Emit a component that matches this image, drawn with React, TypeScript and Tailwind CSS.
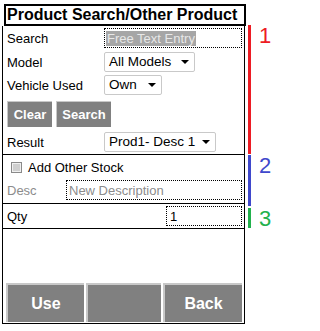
import React from "react";

const font = { fontFamily: '"Liberation Sans", Arial, sans-serif' };

const Arrow = () => (
  <span className="ml-auto h-0 w-0 border-x-[4px] border-t-[4px] border-x-transparent border-t-black" />
);

function Select({ value, width }: { value: string; width: string }) {
  return (
    <div
      className={`${width} flex h-[20px] items-center rounded-[2px] border border-[#c9c9c9] bg-white pl-[4px] pr-[5px] text-[13.5px] text-black`}
    >
      <span className="leading-none">{value}</span>
      <Arrow />
    </div>
  );
}

function Row({ label, children, labelWidth = "w-[97px]", className = "" }: { label: string; children: React.ReactNode; labelWidth?: string; className?: string }) {
  return (
    <div className={`flex items-center ${className}`}>
      <span className={`${labelWidth} shrink-0 text-[13px] leading-none`}>{label}</span>
      {children}
    </div>
  );
}

function Annotation({ color, digit, height, className = "" }: { color: string; digit: string; height: string; className?: string }) {
  return (
    <div className={`flex ${height} ${className}`}>
      <div className={`w-[3px] ${color === "red" ? "bg-[#ed1c24]" : color === "blue" ? "bg-[#3f48cc]" : "bg-[#22b14c]"}`} />
      <span
        className={`ml-[8px] text-[22px] leading-none ${color === "red" ? "text-[#ed1c24]" : color === "blue" ? "text-[#3f48cc]" : "text-[#22b14c]"}`}
      >
        {digit}
      </span>
    </div>
  );
}

export default function App() {
  return (
    <div className="flex h-[331px] w-[291px] bg-white pl-[2px] pt-[4px] text-black" style={font}>
      <div className="flex w-[244px] flex-col">
        <div className="ml-[2px] flex h-[22px] w-[242px] items-center border-2 border-black pl-[1px] text-[16px] font-bold leading-none">
          Product Search/Other Product
        </div>
        <div className="flex h-[298px] w-[243px] flex-col border-x border-b border-black">
          {/* section 1 */}
          <div className="flex flex-col border-b border-black pb-[2px] pl-[4px] pt-[2px]">
            <Row label="Search" className="h-[20px]">
              <div className="flex h-[20px] w-[138px] items-center border border-dotted border-black pl-[1px]">
                <span className="bg-[#a6a6a6] px-[1px] text-[13px] leading-[15px] text-[#e8e8e8]">Free Text Entry</span>
              </div>
            </Row>
            <Row label="Model" className="mt-[4px] h-[20px]">
              <Select value="All Models" width="w-[91px]" />
            </Row>
            <Row label="Vehicle Used" className="mt-[3px] h-[20px]">
              <Select value="Own" width="w-[58px]" />
            </Row>
            <div className="mt-[6px] flex h-[26px] gap-[4px]">
              <button className="w-[45px] border-l border-t border-[#c8c8c8] bg-[#808080] text-[13px] font-bold text-white">
                Clear
              </button>
              <button className="w-[55px] border-l border-t border-[#c8c8c8] bg-[#808080] text-[13px] font-bold text-white">
                Search
              </button>
            </div>
            <Row label="Result" className="mt-[5px] h-[20px]">
              <Select value="Prod1- Desc 1" width="w-[112px]" />
            </Row>
          </div>
          {/* section 2 */}
          <div className="flex flex-col border-b border-black pb-[3px] pl-[4px] pt-[2px]">
            <div className="flex h-[20px] items-center">
              <span className="ml-[4px] flex h-[11px] w-[11px] items-center justify-center border border-[#8a8a8a] bg-[#f0f0f0]">
                <span className="h-[7px] w-[7px] bg-[#cfcfcf]" />
              </span>
              <span className="ml-[6px] text-[13px] leading-none">Add Other Stock</span>
            </div>
            <Row label="Desc" labelWidth="w-[59px]" className="mt-[3px] h-[20px] text-[#8c8c8c]">
              <div className="flex h-[20px] w-[176px] items-center border border-dotted border-black pl-[2px] text-[13px] leading-none text-[#8c8c8c]">
                New Description
              </div>
            </Row>
          </div>
          {/* section 3 */}
          <div className="flex h-[25px] items-center justify-between border-b border-black pl-[4px] pr-[2px]">
            <span className="text-[13px] leading-none">Qty</span>
            <div className="flex h-[20px] w-[76px] items-center border border-dotted border-black pl-[3px] text-[13px] leading-none">
              1
            </div>
          </div>
          <div className="flex-1" />
          <div className="grid h-[39px] grid-cols-[78px_75px_79px] gap-[2px] pl-[3px]">
            <button className="border-l-2 border-t-2 border-[#c8c8c8] bg-[#808080] text-[16px] font-bold text-white">Use</button>
            <button className="border-l-2 border-t-2 border-[#c8c8c8] bg-[#808080]" />
            <button className="border-l-2 border-t-2 border-[#c8c8c8] bg-[#808080] text-[16px] font-bold text-white">Back</button>
          </div>
          <div className="h-[1px]" />
        </div>
      </div>
      <div className="ml-[2px] mt-[21px] flex flex-col">
        <Annotation color="red" digit="1" height="h-[129px]" className="pt-0" />
        <Annotation color="blue" digit="2" height="h-[51px]" className="mt-[1px]" />
        <Annotation color="green" digit="3" height="h-[20px]" className="mt-[2px]" />
      </div>
    </div>
  );
}
